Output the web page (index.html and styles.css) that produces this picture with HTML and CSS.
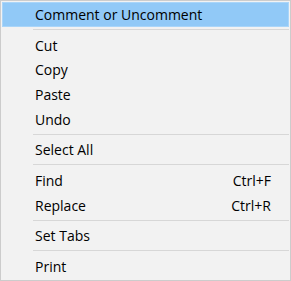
FILE: index.html
```html
<!DOCTYPE html>
<html lang="en">
<head>
    <meta charset="UTF-8">
    <title>Context Menu</title>
    <link rel="stylesheet" href="styles.css">
</head>
<body>
    <div class="menu">
        <div class="menu-item active"><span>Comment or Uncomment</span></div>
        <div class="separator"></div>
        <div class="menu-item"><span>Cut</span></div>
        <div class="menu-item"><span>Copy</span></div>
        <div class="menu-item"><span>Paste</span></div>
        <div class="menu-item"><span>Undo</span></div>
        <div class="separator"></div>
        <div class="menu-item"><span>Select All</span></div>
        <div class="separator"></div>
        <div class="menu-item"><span>Find</span><span class="shortcut">Ctrl+F</span></div>
        <div class="menu-item"><span>Replace</span><span class="shortcut">Ctrl+R</span></div>
        <div class="separator"></div>
        <div class="menu-item"><span>Set Tabs</span></div>
        <div class="separator"></div>
        <div class="menu-item"><span>Print</span></div>
    </div>
</body>
</html>
```

FILE: styles.css
```css
body {
    margin: 0;
    background-color: #ffffff;
    font-family: "Open Sans", "Noto Sans", sans-serif;
}
.menu {
    width: 291px;
    height: 281px;
    box-sizing: border-box;
    background-color: #f2f2f2;
    border: 1px solid #cccccc;
    padding: 1px;
    display: flex;
    flex-direction: column;
}
.menu-item {
    height: 25px;
    display: flex;
    align-items: center;
    justify-content: space-between;
    padding: 0 17px 0 32px;
    font-size: 14px;
    color: #000;
    box-sizing: border-box;
    border: 1px solid transparent;
}
.menu-item.active {
    background-color: #91c9f7;
    border-color: #a9d5f9;
}
.separator {
    height: 1px;
    background-color: #d7d7d7;
    margin: 2px 0 3px 31px;
}
```
